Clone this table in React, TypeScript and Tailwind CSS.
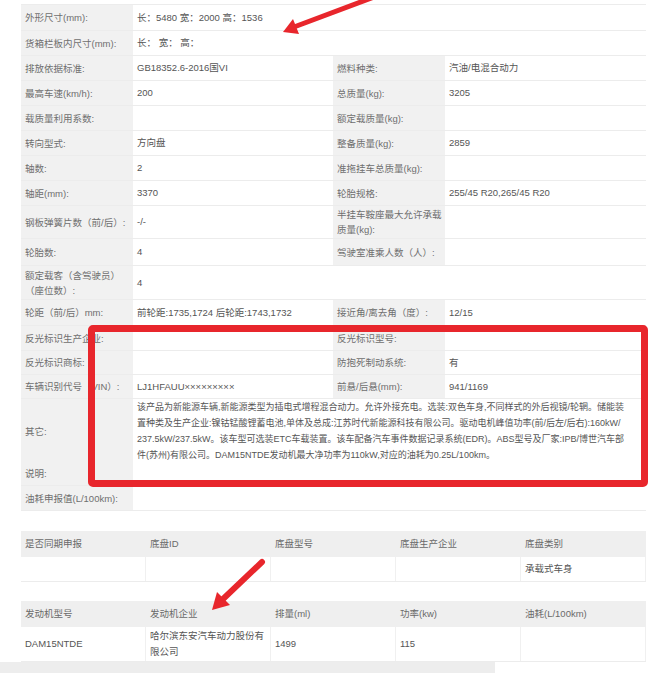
import React from 'react';

type Row = {
  h: string;
  label: React.ReactNode;
  value?: React.ReactNode;
  label2?: React.ReactNode;
  value2?: React.ReactNode;
  kind: 'pair' | 'half' | 'full';
};

const rows: Row[] = [
  { h: 'h-[26px]', kind: 'half', label: '外形尺寸(mm):', value: '长：5480 宽：2000 高：1536' },
  { h: 'h-[25px]', kind: 'half', label: '货箱栏板内尺寸(mm):', value: '长：  宽：  高：' },
  { h: 'h-[25px]', kind: 'pair', label: '排放依据标准:', value: 'GB18352.6-2016国VI', label2: '燃料种类:', value2: '汽油/电混合动力' },
  { h: 'h-[25px]', kind: 'pair', label: '最高车速(km/h):', value: '200', label2: '总质量(kg):', value2: '3205' },
  { h: 'h-[25px]', kind: 'pair', label: '载质量利用系数:', value: '', label2: '额定载质量(kg):', value2: '' },
  { h: 'h-[25px]', kind: 'pair', label: '转向型式:', value: '方向盘', label2: '整备质量(kg):', value2: '2859' },
  { h: 'h-[25px]', kind: 'pair', label: '轴数:', value: '2', label2: '准拖挂车总质量(kg):', value2: '' },
  { h: 'h-[25px]', kind: 'pair', label: '轴距(mm):', value: '3370', label2: '轮胎规格:', value2: '255/45 R20,265/45 R20' },
  {
    h: 'h-[33px]',
    kind: 'pair',
    label: '钢板弹簧片数（前/后）:',
    value: '-/-',
    label2: (
      <>
        半挂车鞍座最大允许承载
        <br />
        质量(kg):
      </>
    ),
    value2: '',
  },
  { h: 'h-[27px]', kind: 'pair', label: '轮胎数:', value: '4', label2: '驾驶室准乘人数（人）:', value2: '' },
  {
    h: 'h-[34px]',
    kind: 'half',
    label: (
      <>
        额定载客（含驾驶员）
        <br />
        （座位数）:
      </>
    ),
    value: '4',
  },
  { h: 'h-[26px]', kind: 'pair', label: '轮距（前/后）mm:', value: '前轮距:1735,1724 后轮距:1743,1732', label2: '接近角/离去角（度）:', value2: '12/15' },
  { h: 'h-[25px]', kind: 'pair', label: '反光标识生产企业:', value: '', label2: '反光标识型号:', value2: '' },
  { h: 'h-[24px]', kind: 'pair', label: '反光标识商标:', value: '', label2: '防抱死制动系统:', value2: '有' },
  { h: 'h-[24px]', kind: 'pair', label: '车辆识别代号（VIN）:', value: 'LJ1HFAUU×××××××××', label2: '前悬/后悬(mm):', value2: '941/1169' },
  {
    h: 'h-[63px]',
    kind: 'full',
    label: '其它:',
    value: (
      <span className="text-[9px]">
        该产品为新能源车辆,新能源类型为插电式增程混合动力。允许外接充电。选装:双色车身,不同样式的外后视镜/轮辋。储能装
        <br />
        置种类及生产企业:镍钴锰酸锂蓄电池,单体及总成:江苏时代新能源科技有限公司。驱动电机峰值功率(前/后左/后右):160kW/
        <br />
        237.5kW/237.5kW。该车型可选装ETC车载装置。该车配备汽车事件数据记录系统(EDR)。ABS型号及厂家:IPB/博世汽车部
        <br />
        件(苏州)有限公司。DAM15NTDE发动机最大净功率为110kW,对应的油耗为0.25L/100km。
      </span>
    ),
  },
  { h: 'h-[24px]', kind: 'full', label: '说明:', value: '' },
  { h: 'h-[25px]', kind: 'full', label: '油耗申报值(L/100km):', value: '' },
];

const labelCls = 'bg-[#f1f1f1] text-[#6f6f6f] px-[4px] flex items-center leading-[15px] whitespace-nowrap';
const valueCls = 'bg-white text-[#555] px-[4px] flex items-center leading-[16px] whitespace-nowrap';

const SpecRow: React.FC<{ row: Row }> = ({ row }) => (
  <div className={`grid grid-cols-[112px_200px_112px_201px] border-b border-[#ececec] ${row.h}`}>
    <div className={labelCls}>{row.label}</div>
    {row.kind === 'full' ? (
      <div className={`${valueCls} col-span-3`}>{row.value}</div>
    ) : (
      <div className={valueCls}>{row.value}</div>
    )}
    {row.kind === 'pair' && (
      <>
        <div className={labelCls}>{row.label2}</div>
        <div className={valueCls}>{row.value2}</div>
      </>
    )}
    {row.kind === 'half' && <div className="col-span-2 bg-white" />}
  </div>
);

const SmallTable: React.FC<{ heads: string[]; cells: React.ReactNode[]; rowH: string }> = ({ heads, cells, rowH }) => (
  <div className="w-[625px] border-b border-[#ececec]">
    <div className="grid grid-cols-5 h-[26px] bg-[#efefef] text-[#6a6a6a]">
      {heads.map((h) => (
        <div key={h} className="px-[4px] flex items-center whitespace-nowrap">
          {h}
        </div>
      ))}
    </div>
    <div className={`grid grid-cols-5 bg-white text-[#555] ${rowH}`}>
      {cells.map((c, i) => (
        <div key={i} className="px-[4px] flex items-center leading-[16px] whitespace-nowrap border-r border-[#f0f0f0]">
          {c}
        </div>
      ))}
    </div>
  </div>
);

export default function App() {
  return (
    <div
      className="relative w-[660px] h-[673px] bg-white overflow-hidden text-[9.5px]"
      style={{ fontFamily: '"Liberation Sans", "Noto Sans CJK SC", sans-serif' }}
    >
      <div className="pt-[4px] pl-[21px] flex flex-col">
        <div className="w-[625px] border-t border-r border-[#ececec]">
          {rows.map((r, i) => (
            <SpecRow key={i} row={r} />
          ))}
        </div>

        <div className="mt-[20px]">
          <SmallTable
            heads={['是否同期申报', '底盘ID', '底盘型号', '底盘生产企业', '底盘类别']}
            cells={['', '', '', '', '承载式车身']}
            rowH="h-[24px]"
          />
        </div>

        <div className="mt-[19px]">
          <SmallTable
            heads={['发动机型号', '发动机企业', '排量(ml)', '功率(kw)', '油耗(L/100km)']}
            cells={[
              'DAM15NTDE',
              <span key="e">
                哈尔滨东安汽车动力股份有
                <br />
                限公司
              </span>,
              '1499',
              '115',
              '',
            ]}
            rowH="h-[34px]"
          />
        </div>
      </div>

      <div className="h-[14px] w-[495px] bg-[#ededed]" />

      {/* red annotation box */}
      <div className="absolute left-[88px] top-[325px] w-[560px] h-[162px] border-[7px] border-[#e8262c] rounded-[5px]" />

      {/* annotation arrows */}
      <svg className="absolute left-0 top-0" width="660" height="673" viewBox="0 0 660 673">
        <line x1="374" y1="-3" x2="294" y2="27" stroke="#e8262c" strokeWidth="5" strokeLinecap="round" />
        <polygon points="283,32 299,34 293,19" fill="#e8262c" />
        <line x1="262" y1="562" x2="222" y2="600" stroke="#e8262c" strokeWidth="6" strokeLinecap="round" />
        <polygon points="212,610 230,605 217,592" fill="#e8262c" />
      </svg>
    </div>
  );
}
